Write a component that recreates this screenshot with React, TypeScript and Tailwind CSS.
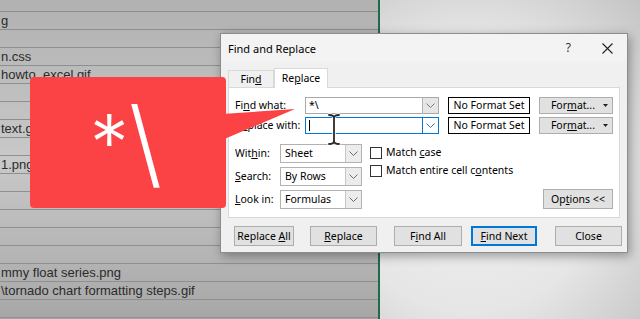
import React from "react";

const cells: string[] = [
  "",
  "g",
  "",
  "n.css",
  "howto_excel.gif",
  "",
  "",
  "text.gif",
  "",
  "1.png",
  "",
  "",
  "",
  "",
  "",
  "mmy float series.png",
  "\\tornado chart formatting steps.gif",
  "",
];

const Chevron = ({ color = "#6d6d6d" }: { color?: string }) => (
  <svg width="9" height="5" viewBox="0 0 9 5">
    <polyline points="0.5,0.5 4.5,4.5 8.5,0.5" fill="none" stroke={color} strokeWidth="1" />
  </svg>
);

const Combo = ({ value, focused }: { value?: string; focused?: boolean }) => (
  <div
    className={`w-[134px] h-[17px] flex bg-white border ${
      focused ? "border-[#0078d7]" : "border-[#a9a9a9]"
    }`}
  >
    <div className="flex-1 flex items-center pl-[3px] text-black">
      {focused ? <span className="w-px h-[11px] bg-black" /> : value}
    </div>
    <div
      className={`w-[16px] flex items-center justify-center border-l ${
        focused ? "border-[#0078d7] bg-white" : "border-[#b4b4b4] bg-[#e6e6e6]"
      }`}
    >
      <Chevron color={focused ? "#3d6f9e" : "#7a7a7a"} />
    </div>
  </div>
);

const Select = ({ value }: { value: string }) => (
  <div className="w-[82px] h-[19px] flex bg-white border border-[#b2b2b2]">
    <div className="flex-1 flex items-center pl-[4px] text-black">{value}</div>
    <div className="w-[16px] flex items-center justify-center border-l border-[#c6c6c6] bg-[#ececec]">
      <Chevron />
    </div>
  </div>
);

const Btn = ({
  children,
  w,
  primary,
  className = "",
}: {
  children: React.ReactNode;
  w: string;
  primary?: boolean;
  className?: string;
}) => (
  <div
    className={`${w} h-[20px] flex items-center justify-center bg-[#e1e1e1] text-black ${
      primary ? "border-2 border-[#0078d7]" : "border border-[#adadad]"
    } ${className}`}
  >
    <span>{children}</span>
  </div>
);

const FormatBtn = () => (
  <div className="w-[74px] h-[17px] ml-[9px] flex items-center justify-end gap-[8px] pr-[4px] bg-[#e1e1e1] border border-[#adadad] text-black">
    <span>
      For<u>m</u>at...
    </span>
    <svg width="5" height="3" viewBox="0 0 5 3">
      <polygon points="0,0 5,0 2.5,3" fill="#222" />
    </svg>
  </div>
);

const NoFormat = () => (
  <div className="w-[82px] h-[17px] ml-[9px] flex items-center justify-center bg-white border border-black text-black">
    No Format Set
  </div>
);

const Check = ({ children }: { children: React.ReactNode }) => (
  <div className="flex items-center gap-[4px] h-[13px]">
    <div className="w-[12px] h-[12px] bg-white border border-[#333]" />
    <span className="text-black">{children}</span>
  </div>
);

export default function App() {
  return (
    <div className="relative w-[640px] h-[319px] overflow-hidden flex font-['Noto_Sans',sans-serif]">
      {/* sheet */}
      <div className="w-[378px] h-full flex flex-col bg-linear-to-b from-[#b1b1b1] via-[#c9c9c9] to-[#a7a7a7] font-['Liberation_Sans',Arial,sans-serif] text-[13px] text-[#2b2b2b]">
        {cells.map((c, i) => (
          <div
            key={i}
            className={`${i === 0 ? "h-[12px]" : "h-[18px]"} shrink-0 flex items-center pl-px border-b border-[#8f8f8f] whitespace-nowrap overflow-hidden`}
          >
            {c}
          </div>
        ))}
      </div>
      <div className="w-[2px] h-full bg-[#1d6b49]" />
      <div className="flex-1 h-full bg-[radial-gradient(ellipse_at_35%_55%,#f1f1f1_0%,#e6e6e6_55%,#c4c4c4_100%)]" />

      {/* dialog */}
      <div className="absolute left-[220px] top-[33px] w-[408px] h-[220px] flex flex-col bg-[#f0f0f0] border border-[#8c8c8c] shadow-[2px_3px_10px_rgba(0,0,0,0.35)] text-[10.5px] leading-none">
        <div className="h-[28px] shrink-0 flex items-center pl-[7px] pr-[14px] bg-[#f3f3f3] text-[11px] text-black">
          <span>Find and Replace</span>
          <span className="ml-auto text-[12px] text-[#333]">?</span>
          <svg className="ml-[31px]" width="11" height="11" viewBox="0 0 11 11">
            <path d="M0.5 0.5 L10.5 10.5 M10.5 0.5 L0.5 10.5" stroke="#222" strokeWidth="1.1" />
          </svg>
        </div>

        <div className="px-[7px] mt-[6px]">
          <div className="h-[19px] flex items-end">
            <div className="w-[46px] h-[17px] flex items-center justify-center bg-[#f0f0f0] border border-b-0 border-[#d9d9d9] text-black">
              <span>
                Fin<u>d</u>
              </span>
            </div>
            <div className="relative z-10 w-[54px] h-[20px] -mb-px flex items-center justify-center bg-white border border-b-0 border-[#d9d9d9] text-black">
              <span>
                Re<u>p</u>lace
              </span>
            </div>
          </div>

          <div className="h-[131px] bg-white border border-[#d9d9d9] pt-[9px] pl-[6px] text-black">
            <div className="flex items-center">
              <span className="w-[70px]">
                Fi<u>n</u>d what:
              </span>
              <Combo value="*\" />
              <NoFormat />
              <FormatBtn />
            </div>
            <div className="flex items-center mt-[3px]">
              <span className="w-[70px]">
                R<u>e</u>place with:
              </span>
              <Combo focused />
              <NoFormat />
              <FormatBtn />
            </div>

            <div className="flex mt-[10px]">
              <div className="flex flex-col gap-[4px]">
                <div className="flex items-center">
                  <span className="w-[45px]">
                    Wit<u>h</u>in:
                  </span>
                  <Select value="Sheet" />
                </div>
                <div className="flex items-center">
                  <span className="w-[45px]">
                    <u>S</u>earch:
                  </span>
                  <Select value="By Rows" />
                </div>
                <div className="flex items-center">
                  <span className="w-[45px]">
                    <u>L</u>ook in:
                  </span>
                  <Select value="Formulas" />
                </div>
              </div>
              <div className="flex flex-col gap-[5px] ml-[8px] mt-[2px]">
                <Check>
                  Match <u>c</u>ase
                </Check>
                <Check>
                  Match entire cell c<u>o</u>ntents
                </Check>
              </div>
              <div className="ml-auto mr-[6px] mt-[45px]">
                <Btn w="w-[70px]" className="h-[18px]">
                  Op<u>t</u>ions &lt;&lt;
                </Btn>
              </div>
            </div>
          </div>
        </div>

        <div className="flex mt-[8px]">
          <Btn w="w-[60px]" className="ml-[13px]">
            Replace <u>A</u>ll
          </Btn>
          <Btn w="w-[67px]" className="ml-[16px]">
            <u>R</u>eplace
          </Btn>
          <Btn w="w-[68px]" className="ml-[17px]">
            F<u>i</u>nd All
          </Btn>
          <Btn w="w-[66px]" primary className="ml-[9px]">
            <u>F</u>ind Next
          </Btn>
          <Btn w="w-[67px]" className="ml-[18px]">
            Close
          </Btn>
        </div>
      </div>

      {/* text cursor over the dialog */}
      <svg className="absolute left-[327px] top-[113px]" width="14" height="33" viewBox="0 0 14 33">
        <g stroke="#fff" strokeWidth="3.4" fill="none" strokeLinecap="round">
          <path d="M2 2 Q7 2 7 5 Q7 2 12 2 M7 5 L7 28 M2 31 Q7 31 7 28 Q7 31 12 31" />
        </g>
        <g stroke="#2a2a2a" strokeWidth="1.8" fill="none" strokeLinecap="round">
          <path d="M2 2 Q7 2 7 5 Q7 2 12 2 M7 5 L7 28 M2 31 Q7 31 7 28 Q7 31 12 31" />
        </g>
      </svg>

      {/* red callout */}
      <div className="absolute left-[30px] top-[77px] w-[196px] h-[131px] rounded-[4px] bg-[#fb4245] flex items-center justify-center text-white font-['Inter',sans-serif] font-light leading-none">
        <div className="flex items-start -ml-[4px] -mt-[2px]">
          <span className="text-[78px] mt-[10px]">*</span>
          <span className="text-[96px]">\</span>
        </div>
      </div>
      <svg className="absolute left-[222px] top-[105px]" width="74" height="36" viewBox="0 0 74 36">
        <polygon points="0,9 73,4 0,35" fill="#fb4245" />
      </svg>
    </div>
  );
}
